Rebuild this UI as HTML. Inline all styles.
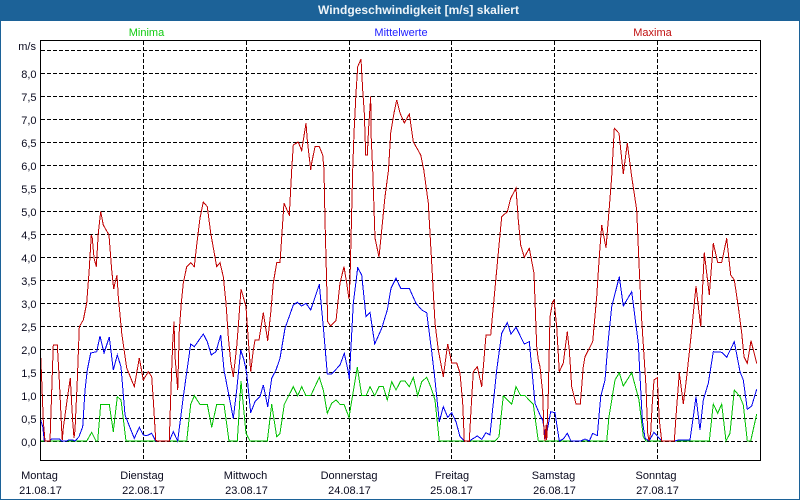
<!DOCTYPE html>
<html><head><meta charset="utf-8"><style>
html,body{margin:0;padding:0;background:#fff}
svg{display:block}
text{font-family:"Liberation Sans",sans-serif;font-size:11px;fill:#0a0a1e}
.l{text-anchor:end}.m{text-anchor:middle}
polyline{fill:none;stroke-width:1;shape-rendering:crispEdges}
.g{stroke:#000;stroke-width:1;stroke-dasharray:4 2;shape-rendering:crispEdges}
</style></head><body>
<svg width="800" height="500" viewBox="0 0 800 500" xmlns="http://www.w3.org/2000/svg">
<rect width="800" height="500" fill="#1c6298"/>
<rect x="1" y="21" width="798" height="478" fill="#fff"/>
<text x="418.5" y="14" class="m" style="font-weight:bold;font-size:12px;fill:#eef4f8" textLength="201">Windgeschwindigkeit [m/s] skaliert</text>
<text x="146.5" y="36" class="m" style="fill:#10cc10">Minima</text>
<text x="401" y="36" class="m" style="fill:#2020ff">Mittelwerte</text>
<text x="652.5" y="36" class="m" style="fill:#c01010">Maxima</text>
<text x="36" y="50" class="l">m/s</text>
<text x="36.5" y="78" class="l">8,0</text><text x="36.5" y="101" class="l">7,5</text><text x="36.5" y="124" class="l">7,0</text><text x="36.5" y="147" class="l">6,5</text><text x="36.5" y="170" class="l">6,0</text><text x="36.5" y="193" class="l">5,5</text><text x="36.5" y="216" class="l">5,0</text><text x="36.5" y="239" class="l">4,5</text><text x="36.5" y="262" class="l">4,0</text><text x="36.5" y="285" class="l">3,5</text><text x="36.5" y="308" class="l">3,0</text><text x="36.5" y="331" class="l">2,5</text><text x="36.5" y="354" class="l">2,0</text><text x="36.5" y="377" class="l">1,5</text><text x="36.5" y="400" class="l">1,0</text><text x="36.5" y="423" class="l">0,5</text><text x="36.5" y="446" class="l">0,0</text>
<g class="g">
<path class="g" d="M41 50.5H757M41 73.5H757M41 96.5H757M41 119.5H757M41 142.5H757M41 165.5H757M41 188.5H757M41 211.5H757M41 234.5H757M41 257.5H757M41 280.5H757M41 303.5H757M41 326.5H757M41 349.5H757M41 372.5H757M41 395.5H757M41 418.5H757M41 441.5H757"/>
<path class="g" d="M143.5 41V460M246.5 41V460M349.5 41V460M451.5 41V460M554.5 41V460M657.5 41V460"/>
</g>
<polyline stroke="#00c000" points="41,441 86.7,441 91.7,432.3 96,441 97.7,441 100.7,404.3 109.3,404.3 113.3,431.7 117.3,396.7 121,400 126,441 186.7,441 190.7,404.3 194.3,395.7 200,404.3 207.3,404.3 211.7,427.3 216.7,404.3 224,404.3 229,441 237.3,441 241,381 246,433.3 250,441 267.3,441 271.7,404.3 276.7,436.7 280,433.3 284.3,404.3 293.3,386.7 297.7,395.7 301.7,386.7 306,395.7 310.7,395.7 319.3,377.3 323.3,390 327.3,413.3 331.7,403.3 336,400 340,404.3 344,404.3 349,417.3 352.7,395 357.3,367.3 361.7,395.7 366,395.7 370,386.7 374.7,395.7 379,386.7 383.3,386.7 387.3,400 391.7,381.7 396,390 400.7,381 405,381 409.3,386.7 413.3,377.3 417.7,395.7 421.7,381.7 426.7,377.3 430.7,386.7 435,400 439.3,441 495,441 499,436.7 503.3,395.7 511.7,404.3 516,386.7 520.7,395.7 525,395.7 533.3,404.3 538.3,441 606.7,441 609,416.7 615,380 619.3,372.7 623.3,386 631.7,372.7 639,400 643.3,436.7 646,441 709.3,441 713.3,404 717.7,413.3 721.7,404 726,441 730,433.3 734.3,390 740,396.7 743.3,405 747.3,441 750.7,441 756.7,414"/>
<polyline stroke="#0000f0" points="40.7,420 42.7,426.7 44.3,441 49.3,441 51.7,439 59.3,439 61.7,441 66.7,441 68.3,440 72.7,440 75,441 79,436.7 82.7,426.7 85,390 87.3,370 90.7,353 96.7,351.7 100,336 104,353 109.3,337 113.3,370 117.3,355 121,366.7 125,415 134.3,438.3 139.3,427.3 143.3,435 146.7,435.7 151.7,433.3 155.7,441 169.3,441 173.3,431.7 177.7,441 183.3,396.7 190.7,344 194.3,346.7 203.3,334 207.3,341.7 211.3,355 216,351.7 220.7,335 224,370 233.3,418.3 236.7,390 240.7,350 244,360 246.7,373.3 250.7,412.7 255,401.7 260,396.7 263.3,385 267.7,406.7 271.7,378.3 276,370 280,358.3 285,328.3 293.3,305 297.3,302.3 301.7,306 306,303.3 310.7,310 319.3,284.3 323.3,326.7 327.3,374 331.7,374 340,365 344.3,353.3 348.3,371.7 349.3,379 353.3,303.3 357.7,267.7 361.7,275 366,316.7 370,312.3 374.7,344 381.7,328.3 387.3,310 391,288.3 396,278.3 400.7,288.3 409.3,288.3 416,303.3 421.7,310 426.7,312.7 431.7,351.7 435,380 439.3,421.7 443.3,406.7 447.7,417.3 451.7,412.7 456,421.7 460,436.7 464.3,441 469.3,441 477.3,436 481.7,439.3 486,432.7 490,435 496.7,370 501.7,333.3 507.3,322.7 511,334 516,327.3 524.3,344 529.3,341.7 535,403.3 540,415 542.7,420 545.7,438.3 547.3,430 550.7,411.7 555,412.7 559.3,441 563.3,439 567.3,433.3 571,441 580.7,441 585,439 589.3,441 592.7,433.3 597.3,435.7 600.7,396.7 605,380 608.3,340 611.7,306.7 619.3,276.7 623.3,306 631.7,291.7 638.3,343.3 642.3,420 645,438.3 649,441 654,432.3 661.7,441 675,441 678.3,440 690,440 693.3,416.7 696,396.7 700,430 703.3,400 708.3,383.3 713.3,351.7 721.7,352.3 726.7,357.3 734.3,341.7 740,371.7 743.3,380 747.3,409.3 751.7,406 756.7,389.3"/>
<polyline stroke="#c00000" points="40.7,356.7 41.7,380 43.3,421 45,441 49.3,441 50,441 53.3,345 57.3,345 59.3,380 61.7,430 62.3,440 63.3,428 66.7,403 70.3,378 71.3,397 72.7,421 74,438 75,430 77.3,380 79.3,326.7 83.3,320 86.7,303 89,273 91.3,235 92.3,238 94,258 96.3,266.7 98.3,233 100.7,211.7 103.3,225 109,235 111.7,270 113.7,289 115,283 117,275 118.3,296.7 121.7,333 126.7,368 134.3,386.7 139.3,358 143.3,380 148.3,371.7 151.7,376.7 153.3,400 155.7,440 157,441 169.3,441 170.7,396.7 172.7,343 174,321.7 175,356.7 176.7,376.7 177.7,390 179.3,330 181.3,303 183.3,283 186.7,266.7 190.7,262.7 194.3,266.7 196.7,245 200,218 203.3,202 207.3,206.7 210.7,233 216.7,266.7 220,262.7 223.3,276.7 226,303 228.3,336.7 230.7,361.7 233.3,376.7 236.7,346.7 239,316.7 241,289 242.7,295 246,306.7 248.3,340 250.7,371.7 253.3,350 255,340 259,340 263.3,312.7 267.7,340.7 270.7,313 273.3,283 276.7,262.7 280,262.7 284,203 288.3,213 289.3,215 291.7,170 293.3,145 298.3,142 301.7,150.7 306,123 307.3,140 310.7,170 311.7,163 315,146.7 319.3,146.7 322.7,155 324,170 325,220 327.7,321.7 330.7,326 336,320.7 340,283 344,266.7 346.7,283 349,299 350,280 352.7,170 354,133 356,93 357.7,66.7 361,59 362.7,90 364.3,113 365.7,155 367.3,155 368.7,126.7 370.7,96.7 371,133 372.7,170 375,238 379,257 381.7,230 385,196.7 388.5,170 390.7,133 394,113 396.7,100 400,113 404.3,123 409.3,114 413.3,141.7 420.7,155 423.8,170 428.3,203 431.7,263 435,323 438.3,350 443.3,376.7 447.7,344 451.7,363 456.7,363 460,373 462.7,403 464.3,441 469.3,441 471,410 473.3,371.7 477.3,366.7 481.7,386.7 486,335 490.7,335 496.7,270 501.7,216.7 507.3,211.7 510.7,198.3 516,188.3 518.3,220 520.7,245 524.3,257.3 529.3,248.3 534,273.3 536.7,346.7 538.3,360 540,366.7 542.7,393 544,433 545,441 546,425 546.7,440 548.3,393 550,316.7 552.7,301.7 554,300 556.7,326.7 559.3,371.7 563.3,363 567.3,331.7 569.3,350 571.7,386.7 576,404 580.3,404 583.3,366.7 585,356.7 592.7,341.7 596.7,296.7 599.3,256.7 601.7,225 606,248 608.3,220 611.7,176.7 614.3,128.3 619,133.3 623.3,174 627.3,143.3 631.7,176.7 636.7,210 639,263.3 641.7,320 646,386.7 647.7,433 649,441 650.7,433 652.3,403 654,380 657.3,377.7 659.3,420 661.7,441 674.3,441 676.7,406.7 679.3,372.7 683.3,404 686.7,376.7 691.7,330 696,286 700.7,326.7 704.3,252.7 709.3,295 713.3,243.3 717.7,262.3 721.7,262.3 726.7,238.3 730.7,275 734.3,280 738.3,306.7 741.7,333 744,356.7 747.3,363.3 751,340.7 756.7,363.3"/>
<rect x="40.5" y="40.5" width="720" height="420" fill="none" stroke="#000" stroke-width="1" shape-rendering="crispEdges"/>
<text x="39.5" y="479" class="m">Montag</text><text x="142" y="479" class="m">Dienstag</text><text x="245.5" y="479" class="m">Mittwoch</text><text x="349" y="479" class="m">Donnerstag</text><text x="452" y="479" class="m">Freitag</text><text x="553.5" y="479" class="m">Samstag</text><text x="656" y="479" class="m">Sonntag</text>
<text x="40.5" y="494" class="m">21.08.17</text><text x="143.5" y="494" class="m">22.08.17</text><text x="246.5" y="494" class="m">23.08.17</text><text x="349.5" y="494" class="m">24.08.17</text><text x="451.5" y="494" class="m">25.08.17</text><text x="554.5" y="494" class="m">26.08.17</text><text x="657.5" y="494" class="m">27.08.17</text>
</svg>
</body></html>
